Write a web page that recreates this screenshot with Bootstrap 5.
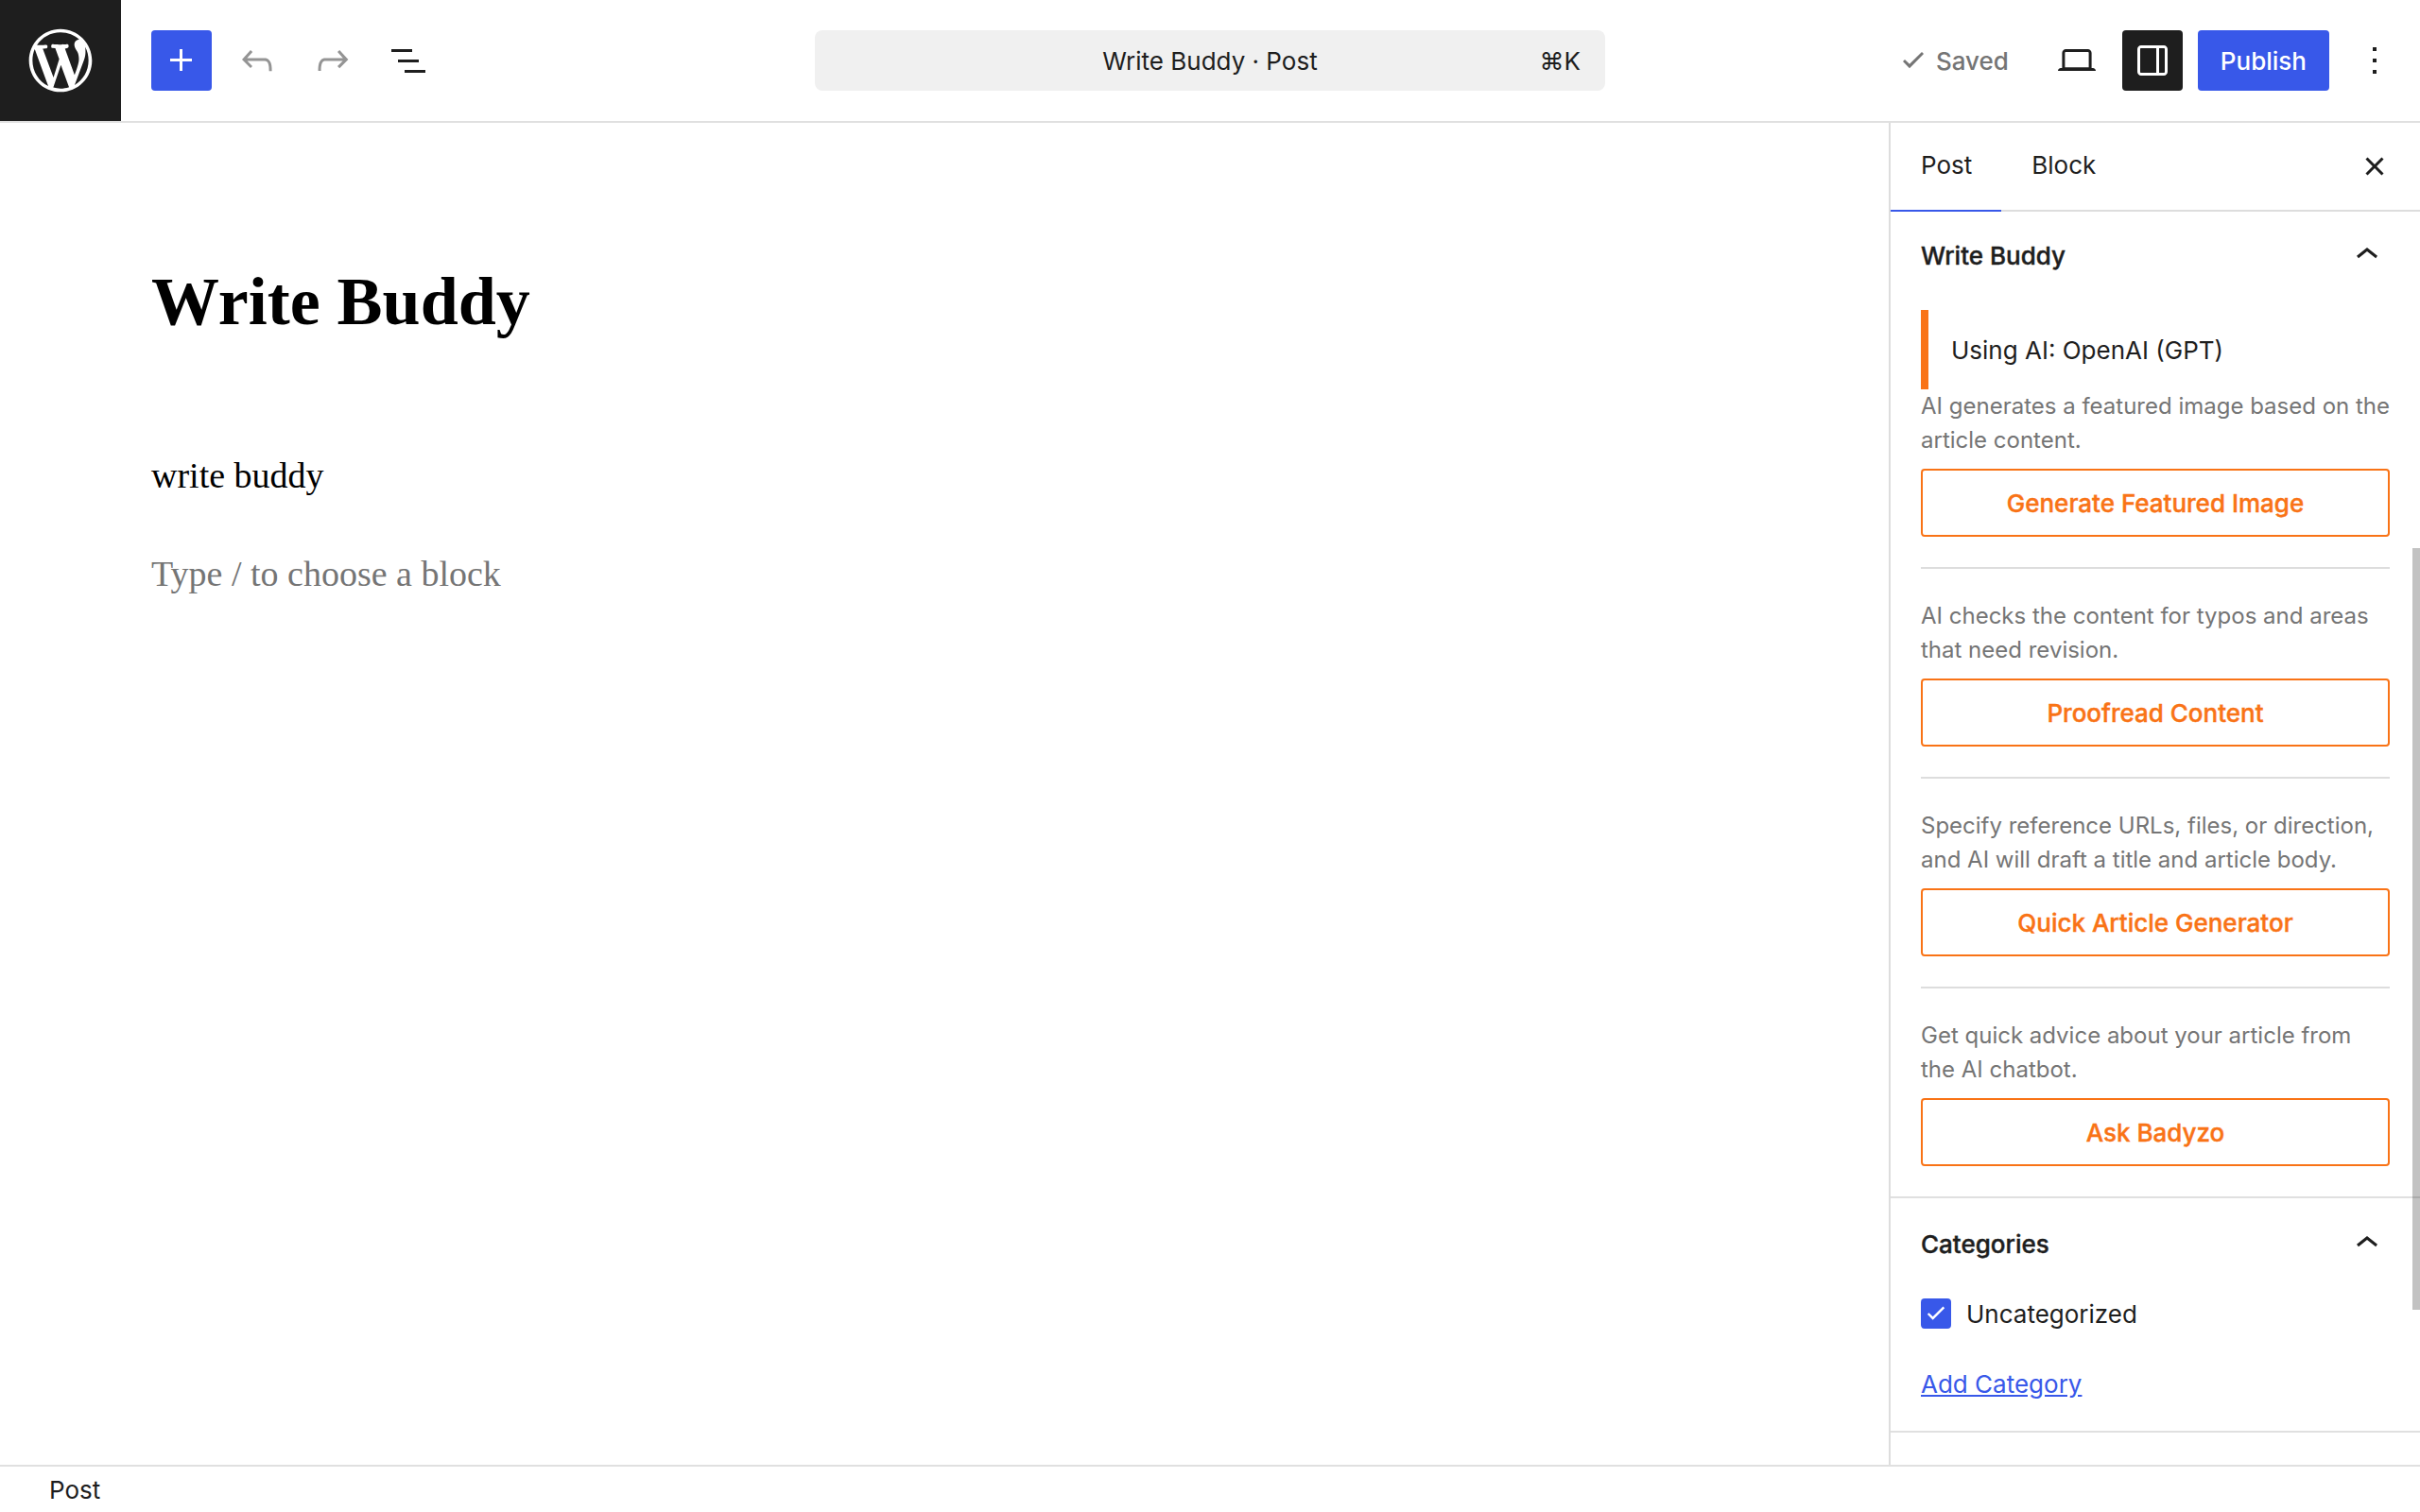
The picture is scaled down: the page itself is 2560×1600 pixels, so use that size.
<!DOCTYPE html>
<html lang="en">
<head>
<meta charset="utf-8">
<meta name="viewport" content="width=device-width, initial-scale=1">
<title>Write Buddy · Post</title>
<link href="https://cdn.jsdelivr.net/npm/bootstrap@5.3.0/dist/css/bootstrap.min.css" rel="stylesheet">
<style>
:root { --ink: #1e1e1e; --accent: #3858e9; --brand: #f97316; --muted: #757575; --line: #ddd; }
body { font-family: Inter, "Liberation Sans", sans-serif; font-size: 26px; line-height: 40px; color: var(--ink); background: #fff; }
svg { display: block; fill: currentColor; flex: none; }
.ico { width: 48px; height: 48px; }
.label-text { padding-top: 2px; }
.topbar { display: grid; grid-template-columns: 1fr minmax(0, 836px) 1fr; border-bottom: 2px solid #e0e0e0; height: 130px; }
.wp-logo { width: 128px; height: 128px; background: var(--ink); color: #fff; }
.wp-logo svg { width: 80px; height: 80px; }
.tool { width: 64px; height: 64px; padding: 0; border: 0; border-radius: 4px; color: var(--ink); display: flex; align-items: center; justify-content: center; flex: none; }
.tool:disabled { color: #949494; border: 0; opacity: 1; }
.tool-accent, .tool-accent:hover { background: var(--accent); color: #fff; }
.tool-dark, .tool-dark:hover { background: var(--ink); color: #fff; }
.command { display: grid; grid-template-columns: 1fr auto 1fr; height: 64px; border: 0; border-radius: 8px; background: #f0f0f0; color: var(--ink); padding: 2px 26px 0; align-items: center; }
.saved { color: var(--muted); font-weight: 500; padding-right: 24px; }
.publish, .publish:hover { height: 64px; background: var(--accent); color: #fff; border: 0; border-radius: 4px; font-size: 26px; font-weight: 500; line-height: 40px; padding: 2px 24px 0; }
.canvas { padding: 149px 160px 0; font-family: "Liberation Serif", serif; color: #000; }
.post-title { font-size: 72px; line-height: 80px; font-weight: 700; margin: 0 0 114px; }
.para { font-size: 38px; line-height: 60px; margin: 0 0 44px; }
.para-input { width: 100%; height: 60px; border: 0; padding: 0; outline: 0; color: #000; background: none; }
.para-input::placeholder { color: var(--muted); opacity: 1; }
.settings { width: 562px; border-left: 2px solid var(--line); }
.tabs { height: 92px; box-shadow: 0 2px 0 var(--line); padding-right: 16px; }
.tab { border: 0; background: none; padding: 0 31px 2px 32px; color: var(--ink); }
.tab.active { box-shadow: 0 2px 0 var(--accent); }
.panel { border-bottom: 2px solid #e0e0e0; padding: 0 32px 32px; }
.panel-cats { padding-bottom: 29px; }
.panel-head { height: 96px; width: 100%; border: 0; background: none; padding: 0; color: var(--ink); font-size: 26px; font-weight: 500; -webkit-text-stroke: 0.4px; }
.notice { border-left: 8px solid var(--brand); padding: 23px 24px 21px; margin-top: 10px; }
.feature + .feature { border-top: 2px solid var(--line); margin-top: 32px; padding-top: 32px; }
.desc { font-size: 24px; line-height: 36px; color: var(--muted); margin: 0 -16px 12px 0; }
.action, .action:hover { display: block; width: 100%; height: 72px; border: 2px solid var(--brand); border-radius: 4px; color: var(--brand); background: #fff; font-size: 26px; line-height: 40px; font-weight: 500; padding: 2px 0 0; -webkit-text-stroke: 0.4px; }
.tick, .tick:checked { width: 32px; height: 32px; margin: 0; border: 0; border-radius: 4px; background-color: var(--accent); }
.tick:checked[type=checkbox] { background-size: 40px 40px; background-image: url("data:image/svg+xml,%3Csvg xmlns='http://www.w3.org/2000/svg' viewBox='0 0 24 24' fill='%23fff'%3E%3Cpath d='M16.5 7.5 10 13.9l-2.5-2.4-1 1 3.5 3.6 7.5-7.6z'/%3E%3C/svg%3E"); }
.cats { padding-top: 5px; margin-bottom: 34px; }
.add-link { color: var(--accent); }
.thumb { right: 0; top: 450px; width: 8px; height: 806px; background: rgba(0,0,0,.24); }
.crumbs { border-top: 2px solid #e0e0e0; height: 50px; padding: 5px 52px 0; }
</style>
<script src="https://cdn.jsdelivr.net/npm/bootstrap@5.3.0/dist/js/bootstrap.bundle.min.js"></script>
</head>
<body class="vh-100 d-flex flex-column overflow-hidden">
<header class="topbar flex-shrink-0">
  <div class="d-flex align-items-center">
    <a href="#" class="wp-logo d-flex align-items-center justify-content-center" aria-label="View Posts">
      <svg viewBox="-2 -2 24 24"><path d="M20 10c0-5.51-4.49-10-10-10C4.48 0 0 4.49 0 10c0 5.52 4.48 10 10 10 5.51 0 10-4.48 10-10zM7.78 15.37L4.37 6.22c.55-.02 1.17-.08 1.17-.08.5-.06.44-1.13-.06-1.11 0 0-1.45.11-2.37.11-.18 0-.37 0-.58-.01C4.12 2.69 6.87 1.11 10 1.11c2.33 0 4.45.87 6.05 2.34-.68-.11-1.65.39-1.65 1.58 0 .74.45 1.36.9 2.1.35.61.55 1.36.55 2.46 0 1.49-1.4 5-1.4 5l-3.03-8.37c.54-.02.82-.17.82-.17.5-.05.44-1.25-.06-1.22 0 0-1.44.12-2.38.12-.87 0-2.33-.12-2.33-.12-.5-.03-.56 1.2-.06 1.22l.92.08 1.26 3.41zM17.41 10c.24-.64.74-1.87.43-4.25.7 1.29 1.05 2.71 1.05 4.25 0 3.29-1.73 6.24-4.4 7.78.97-2.59 1.94-5.2 2.92-7.78zM6.1 18.09C3.12 16.65 1.11 13.53 1.11 10c0-1.3.23-2.48.72-3.59C3.25 10.3 4.67 14.2 6.1 18.09zm4.03-6.63l2.58 6.98c-.86.29-1.76.45-2.71.45-.79 0-1.57-.11-2.29-.33.81-2.38 1.62-4.74 2.42-7.1z"/></svg>
    </a>
    <div class="d-flex gap-3 ms-4 ps-2">
      <button type="button" class="btn tool tool-accent" aria-label="Block Inserter"><svg class="ico" viewBox="0 0 24 24"><path d="M11 12.5V17.5H12.5V12.5H17.5V11H12.5V6H11V11H6V12.5H11Z"/></svg></button>
      <button type="button" class="btn tool" disabled aria-label="Undo"><svg class="ico" viewBox="0 0 24 24"><path d="M18.3 11.7c-.6-.6-1.4-.9-2.3-.9H6.7l2.9-3.3-1.1-1-4.5 5L8.5 16l1-1-2.7-2.7H16c.5 0 .9.2 1.3.5 1 1 1 3.4 1 4.5v.3h1.5v-.2c0-1.5 0-4.3-1.5-5.7z"/></svg></button>
      <button type="button" class="btn tool" disabled aria-label="Redo"><svg class="ico" viewBox="0 0 24 24"><path d="M15.6 6.5l-1.1 1 2.9 3.3H8c-.9 0-1.7.3-2.3.9-1.4 1.5-1.4 4.2-1.4 5.6v.2h1.5v-.3c0-1.1 0-3.5 1-4.5.3-.3.7-.5 1.3-.5h9.2L14.5 15l1.1 1.1 4.6-4.6-4.6-5z"/></svg></button>
      <button type="button" class="btn tool" aria-label="Document Overview"><svg class="ico" viewBox="0 0 24 24"><path d="M3 6h11v1.5H3V6Zm3.500 5.500h11V13h-11v-1.500ZM21 17H10v1.500h11V17Z"/></svg></button>
    </div>
  </div>
  <button type="button" class="command align-self-center"><span></span><span>Write Buddy · Post</span><span class="text-end">⌘K</span></button>
  <div class="d-flex align-items-center justify-content-end gap-3 pe-3">
    <div class="saved d-flex align-items-center"><svg class="ico" viewBox="0 0 24 24"><path d="M16.5 7.5 10 13.9l-2.500-2.400-1 1 3.500 3.600 7.500-7.600z"/></svg><span class="label-text">Saved</span></div>
    <button type="button" class="btn tool" aria-label="View"><svg class="ico" viewBox="0 0 24 24"><path d="M20.500 16h-.7V8c0-1.100-.9-2-2-2H6.200c-1.100 0-2 .9-2 2v8h-.7c-.8 0-1.500.7-1.500 1.500h20c0-.8-.7-1.500-1.500-1.500zM5.700 8c0-.3.2-.5.5-.5h11.600c.3 0 .5.2.5.5v7.600H5.700V8z"/></svg></button>
    <button type="button" class="btn tool tool-dark" aria-label="Settings"><svg class="ico" viewBox="0 0 24 24"><path d="M18 4H6c-1.100 0-2 .9-2 2v12c0 1.100.9 2 2 2h12c1.100 0 2-.9 2-2V6c0-1.100-.9-2-2-2zm-4 14.500H6c-.3 0-.5-.2-.5-.5V6c0-.3.2-.5.5-.5h8v13zm4.500-.5c0 .3-.2.5-.5.5h-2.500v-13H18c.3 0 .5.2.5.5v12z"/></svg></button>
    <button type="button" class="btn publish">Publish</button>
    <button type="button" class="btn tool" aria-label="Options"><svg class="ico" viewBox="0 0 24 24"><path d="M13 19h-2v-2h2v2zm0-6h-2v-2h2v2zm0-6h-2V5h2v2z"/></svg></button>
  </div>
</header>

<div class="d-flex flex-grow-1 overflow-hidden">
  <main class="canvas flex-grow-1">
    <h1 class="post-title">Write Buddy</h1>
    <p class="para">write buddy</p>
    <input class="para para-input" type="text" placeholder="Type / to choose a block" aria-label="Add block">
  </main>

  <aside class="settings flex-shrink-0 position-relative overflow-hidden">
    <div class="tabs d-flex">
      <button type="button" class="tab active">Post</button>
      <button type="button" class="tab">Block</button>
      <button type="button" class="btn tool ms-auto align-self-center" aria-label="Close Settings"><svg class="ico" viewBox="0 0 24 24"><path d="m12 13.060 3.712 3.713 1.061-1.060L13.061 12l3.712-3.712-1.060-1.060L12 10.938 8.288 7.227l-1.061 1.060L10.939 12l-3.712 3.712 1.060 1.061L12 13.061z"/></svg></button>
    </div>
    <section class="panel">
      <button type="button" class="panel-head d-flex align-items-center justify-content-between"><span class="label-text">Write Buddy</span><svg class="ico" viewBox="0 0 24 24"><path d="M6.500 12.400 12 8l5.500 4.400-.9 1.200L12 10l-4.500 3.600-1-1.200z"/></svg></button>
      <div class="notice">Using AI: OpenAI (GPT)</div>
      <div class="feature">
        <p class="desc">AI generates a featured image based on the<br>article content.</p>
        <button type="button" class="btn action">Generate Featured Image</button>
      </div>
      <div class="feature">
        <p class="desc">AI checks the content for typos and areas<br>that need revision.</p>
        <button type="button" class="btn action">Proofread Content</button>
      </div>
      <div class="feature">
        <p class="desc">Specify reference URLs, files, or direction,<br>and AI will draft a title and article body.</p>
        <button type="button" class="btn action">Quick Article Generator</button>
      </div>
      <div class="feature">
        <p class="desc">Get quick advice about your article from<br>the AI chatbot.</p>
        <button type="button" class="btn action">Ask Badyzo</button>
      </div>
    </section>
    <section class="panel panel-cats">
      <button type="button" class="panel-head d-flex align-items-center justify-content-between"><span class="label-text">Categories</span><svg class="ico" viewBox="0 0 24 24"><path d="M6.500 12.400 12 8l5.500 4.400-.9 1.200L12 10l-4.500 3.600-1-1.200z"/></svg></button>
      <div class="cats d-flex align-items-center gap-3">
        <input class="form-check-input tick" type="checkbox" id="cat1" checked>
        <label class="label-text" for="cat1">Uncategorized</label>
      </div>
      <a href="#" class="add-link">Add Category</a>
    </section>
    <div class="thumb position-absolute"></div>
  </aside>
</div>
<footer class="crumbs flex-shrink-0">Post</footer>
</body>
</html>
